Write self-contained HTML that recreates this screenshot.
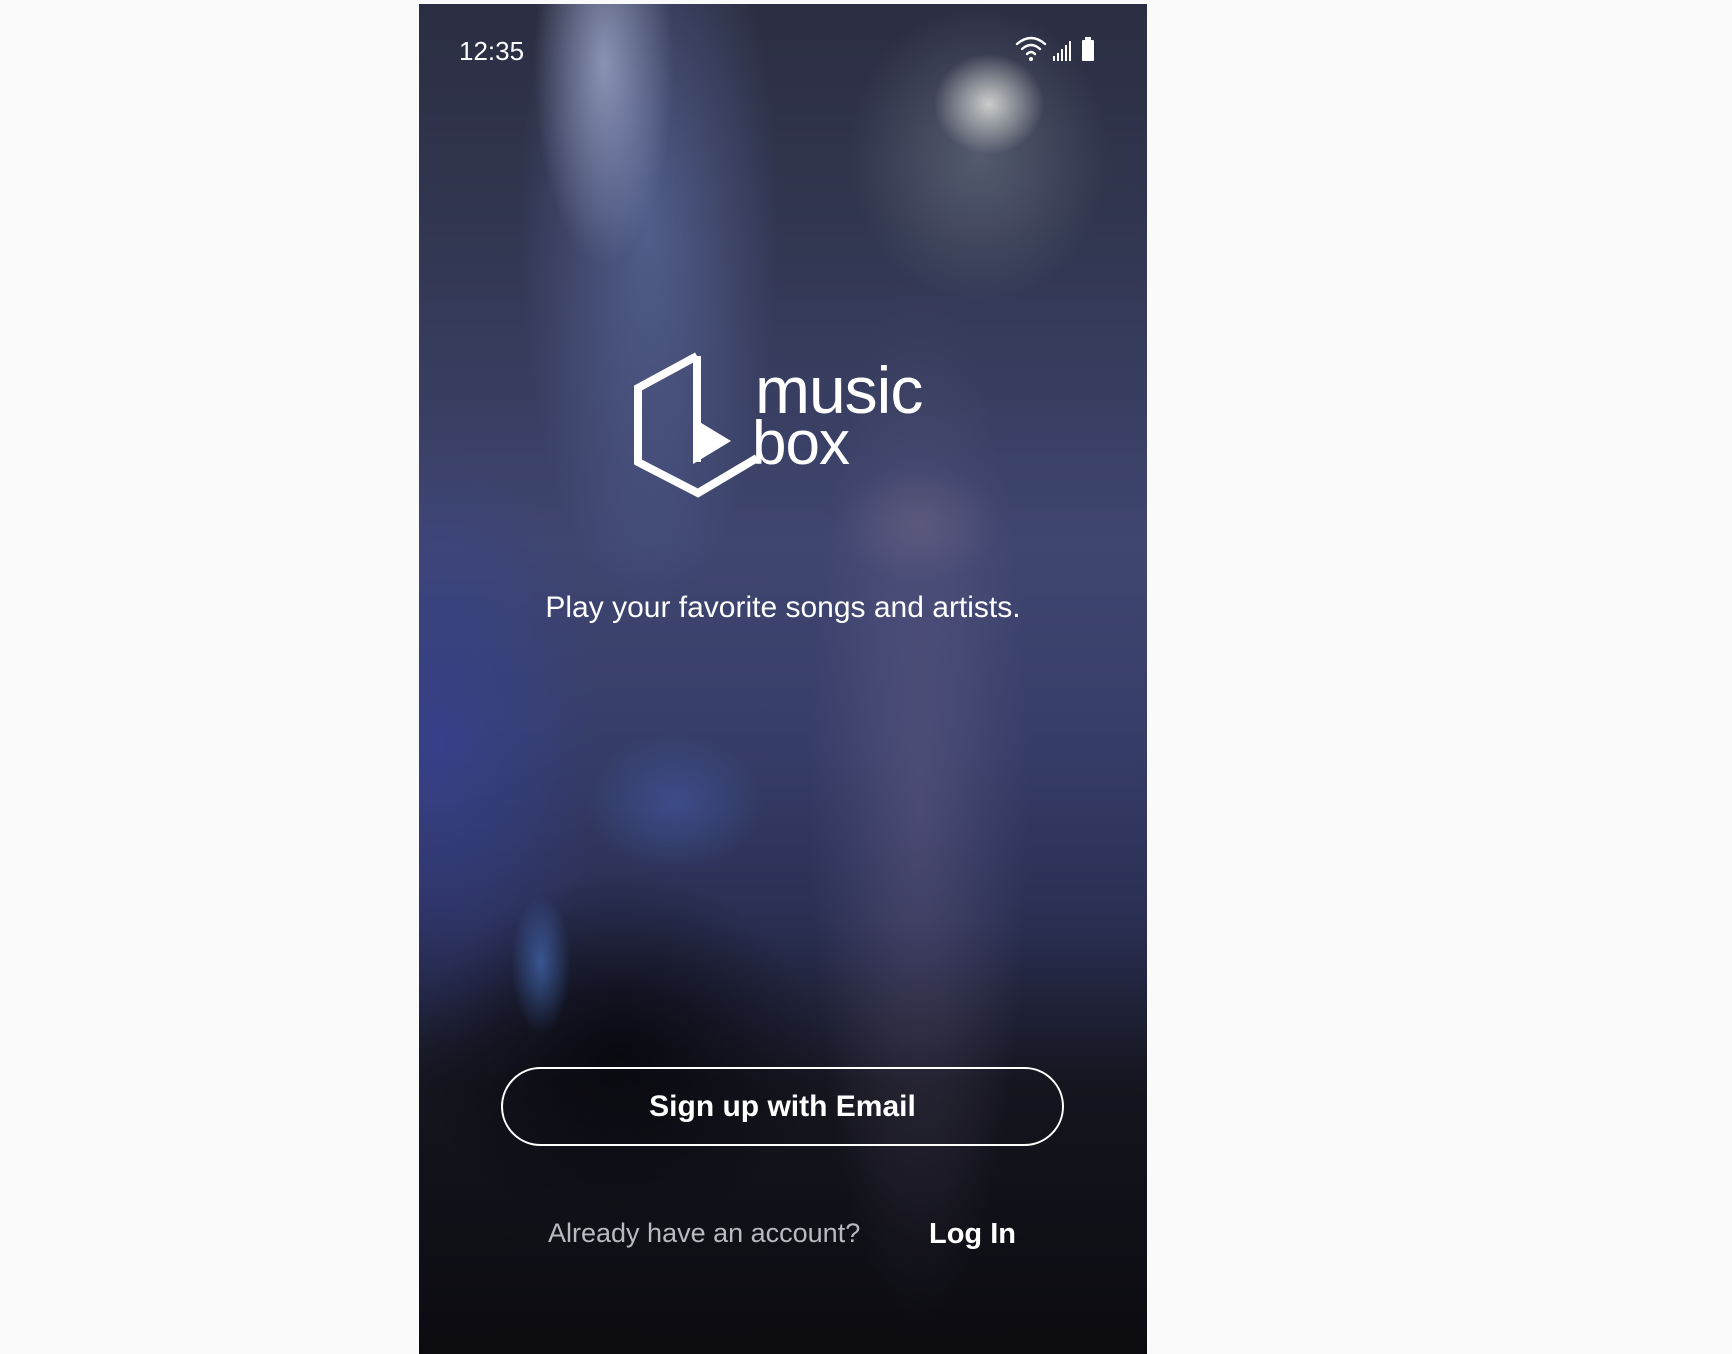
<!DOCTYPE html>
<html><head><meta charset="utf-8"><style>
html,body{margin:0;padding:0;background:#fafafa;width:1732px;height:1354px;overflow:hidden;font-family:"Liberation Sans",sans-serif}
.phone{position:absolute;left:419px;top:4px;width:728px;height:1350px;overflow:hidden;
background:
radial-gradient(ellipse 30px 70px at 122px 960px, rgba(80,130,220,.55), transparent),
radial-gradient(ellipse 90px 70px at 255px 800px, rgba(80,110,210,.35), transparent),
radial-gradient(ellipse 55px 50px at 570px 100px, rgba(225,228,222,.85), transparent),
radial-gradient(ellipse 130px 150px at 560px 150px, rgba(140,150,160,.4), transparent),
radial-gradient(ellipse 70px 200px at 185px 60px, rgba(190,200,235,.6), transparent),
radial-gradient(ellipse 130px 380px at 230px 220px, rgba(120,140,210,.45), transparent),
radial-gradient(ellipse 110px 520px at 500px 800px, rgba(120,110,150,.35), transparent),
radial-gradient(ellipse 80px 60px at 500px 520px, rgba(130,110,140,.35), transparent),
radial-gradient(ellipse 160px 300px at 20px 740px, rgba(55,65,150,.7), transparent),
radial-gradient(ellipse 200px 180px at 200px 1050px, rgba(5,5,10,.8), transparent),
linear-gradient(180deg,#2b2e42 0%,#333854 20%,#3f4670 40%,#363d68 55%,#2a2f52 68%,#15151f 80%,#0b0b10 100%);}
.t{position:absolute;color:#fff;white-space:nowrap}
</style></head><body>
<div class="phone">
<div class="t" style="left:40px;top:32px;font-size:26px">12:35</div>
<svg style="position:absolute;left:596px;top:30px" width="90" height="32" viewBox="0 0 90 32">
<g fill="none" stroke="#fff" stroke-width="2.4" stroke-linecap="round">
<path d="M2 10 Q16 -2 30 10"/><path d="M7 15 Q16 7 25 15"/><path d="M12 20 Q16 16 20 20"/></g>
<circle cx="16" cy="25" r="2" fill="#fff"/>
<g fill="#fff"><rect x="38" y="22" width="2" height="5"/><rect x="42" y="19" width="2" height="8"/><rect x="46" y="15" width="2" height="12"/><rect x="50" y="11" width="2" height="16"/><rect x="54" y="7" width="2" height="20"/>
<rect x="67" y="6" width="12" height="21" rx="1"/><rect x="70" y="3" width="6" height="4"/></g>
</svg>
<svg style="position:absolute;left:0;top:0" width="728" height="560">
<g fill="none" stroke="#fff" stroke-width="8" stroke-linejoin="miter">
<path d="M278 352 L219 384 L219 458 L279 489 L338 454"/>
<path d="M278 352 L278 458"/>
</g>
<path d="M274 414 L312 437 L274 460 Z" fill="#fff"/>
<text x="336" y="409" fill="#fff" font-family="Liberation Sans" font-size="66" letter-spacing="-1">music</text>
<text x="333" y="460" fill="#fff" font-family="Liberation Sans" font-size="62" letter-spacing="-1">box</text>
</svg>
<div class="t" style="left:0;width:728px;text-align:center;top:587px;font-size:30px">Play your favorite songs and artists.</div>
<div style="position:absolute;left:82px;top:1063px;width:559px;height:75px;border:2.5px solid #fff;border-radius:42px;color:#fff;font-weight:bold;font-size:30px;text-align:center;line-height:75px">Sign up with Email</div>
<div class="t" style="left:129px;top:1214px;font-size:27px;color:#b9b9c0">Already have an account?</div>
<div class="t" style="left:510px;top:1214px;font-size:29px;font-weight:bold">Log In</div>
</div>
</body></html>
